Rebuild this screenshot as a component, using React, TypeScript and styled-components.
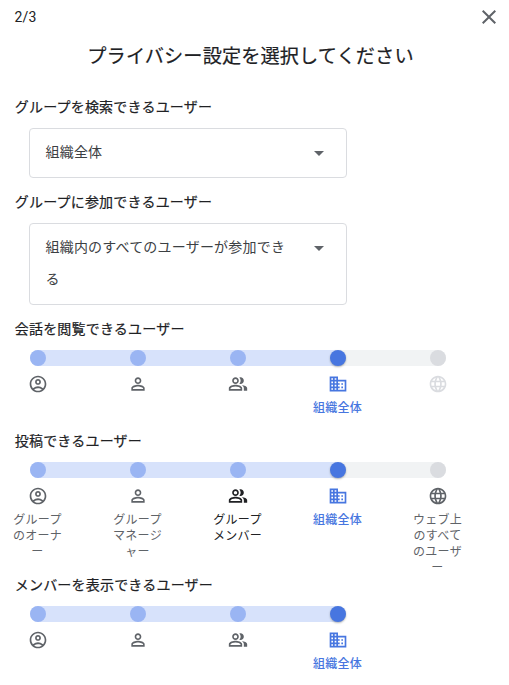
import React from 'react';
import styled, { createGlobalStyle } from 'styled-components';
import {
  MdArrowDropDown,
  MdClose,
  MdDomain,
  MdLanguage,
  MdOutlineAccountCircle,
  MdOutlinePeopleAlt,
  MdPersonOutline,
} from 'react-icons/md';
import type { IconType } from 'react-icons';

const GlobalStyle = createGlobalStyle`
  *, *::before, *::after { box-sizing: border-box; }
  body {
    margin: 0;
    background: #fff;
    color: #202124;
    font-family: Roboto, "Noto Sans CJK JP", sans-serif;
    overflow: hidden;
  }
`;

const Dialog = styled.main`
  display: flex;
  flex-direction: column;
  padding: 0 8px 0 14px;
`;

const Header = styled.header`
  display: flex;
  align-items: center;
  justify-content: space-between;
  height: 34px;
  padding-left: 0.5px;
  font-size: 14px;
  letter-spacing: 0.2px;
`;

const CloseButton = styled.button`
  display: flex;
  padding: 0;
  border: 0;
  background: none;
  color: #5f6368;
  font-size: 24px;
`;

const Title = styled.h1`
  margin: 10px 0 28px;
  padding-right: 14px;
  font-size: 19.2px;
  font-weight: 400;
  letter-spacing: 0.1px;
  line-height: 25px;
  text-align: center;
  -webkit-text-stroke: 0.2px currentColor;
`;

const Section = styled.section<{ $gap: number }>`
  display: flex;
  flex-direction: column;
  margin-bottom: ${({ $gap }) => $gap}px;
`;

const SectionLabel = styled.h2`
  margin: 0 0 11px;
  padding-left: 0.75px;
  font-size: 14px;
  font-weight: 400;
  letter-spacing: 0.2px;
  line-height: 20px;
  -webkit-text-stroke: 0.2px currentColor;
`;

const SelectBox = styled.div`
  display: flex;
  align-items: flex-start;
  justify-content: space-between;
  width: 318px;
  margin-left: 15px;
  padding: 7px 15px 9px 15.5px;
  border: 1px solid #dadce0;
  border-radius: 4px;
  color: #3c4043;
`;

const SelectText = styled.span`
  width: 244px;
  font-size: 14px;
  letter-spacing: 0.2px;
  line-height: 32px;
`;

const SelectArrow = styled(MdArrowDropDown)`
  margin-top: 5px;
  color: #5f6368;
  font-size: 24px;
`;

const Track = styled.div<{ $total: number; $selected: number }>`
  display: flex;
  justify-content: space-between;
  width: ${({ $total }) => ($total - 1) * 100 + 16}px;
  height: 16px;
  margin-left: 16px;
  border-radius: 8px;
  background: linear-gradient(
    to right,
    #d7e2fb ${({ $selected }) => $selected * 100 + 8}px,
    #f1f3f4 ${({ $selected }) => $selected * 100 + 8}px
  );
`;

type StopState = 'passed' | 'selected' | 'beyond';
const stopColor: Record<StopState, string> = {
  passed: '#9ab5f3',
  selected: '#4776e0',
  beyond: '#dadce0',
};

const Stop = styled.span<{ $state: StopState }>`
  width: 16px;
  height: 16px;
  border-radius: 50%;
  background: ${({ $state }) => stopColor[$state]};
  box-shadow: ${({ $state }) => ($state === 'selected' ? '0 1px 2px rgba(60, 64, 67, 0.4)' : 'none')};
`;

const Options = styled.div<{ $height: number }>`
  display: flex;
  gap: 48px;
  height: ${({ $height }) => $height}px;
  margin-left: -2px;
  padding-top: 8px;
`;

type Tone = 'normal' | 'active' | 'hover' | 'disabled';
const toneColor: Record<Tone, string> = {
  normal: '#5f6368',
  active: '#4776e0',
  hover: '#202124',
  disabled: '#dadce0',
};

const Option = styled.div<{ $tone: Tone }>`
  display: flex;
  flex-direction: column;
  flex: 0 0 52px;
  align-items: center;
  color: ${({ $tone }) => toneColor[$tone]};
  font-size: 12px;
  font-weight: ${({ $tone }) => ($tone === 'active' ? 500 : 400)};
  letter-spacing: 0.3px;
  line-height: 16px;
  text-align: center;

  svg {
    flex: none;
    margin-bottom: 6px;
    font-size: 20px;
  }
`;

const OptionLine = styled.span`
  margin-right: 1px;
`;

interface Level {
  icon: IconType;
  text?: string[];
  tone?: Tone;
}

interface SliderProps {
  label: string;
  levels: Level[];
  height?: number;
  gap?: number;
}

const SELECTED = 3;

function AccessSlider({ label, levels, height = 50, gap = 15 }: SliderProps) {
  return (
    <Section $gap={gap}>
      <SectionLabel>{label}</SectionLabel>
      <Track $total={levels.length} $selected={SELECTED}>
        {levels.map((_, i) => (
          <Stop key={i} $state={i < SELECTED ? 'passed' : i === SELECTED ? 'selected' : 'beyond'} />
        ))}
      </Track>
      <Options $height={height}>
        {levels.map(({ icon: Icon, text = [], tone = 'normal' }, i) => (
          <Option key={i} $tone={tone}>
            <Icon />
            {text.map((line, n) => (
              <OptionLine key={n}>{line}</OptionLine>
            ))}
          </Option>
        ))}
      </Options>
    </Section>
  );
}

function SelectField({ label, value }: { label: string; value: string }) {
  return (
    <Section $gap={14}>
      <SectionLabel>{label}</SectionLabel>
      <SelectBox>
        <SelectText>{value}</SelectText>
        <SelectArrow />
      </SelectBox>
    </Section>
  );
}

const owner: Level = { icon: MdOutlineAccountCircle };
const manager: Level = { icon: MdPersonOutline };
const member: Level = { icon: MdOutlinePeopleAlt };
const organization: Level = { icon: MdDomain, text: ['組織全体'], tone: 'active' };

export default function App() {
  return (
    <>
      <GlobalStyle />
      <Dialog lang="ja">
        <Header>
          <span>2/3</span>
          <CloseButton aria-label="閉じる">
            <MdClose />
          </CloseButton>
        </Header>
        <Title>プライバシー設定を選択してください</Title>
        <SelectField label="グループを検索できるユーザー" value="組織全体" />
        <SelectField label="グループに参加できるユーザー" value="組織内のすべてのユーザーが参加できる" />
        <AccessSlider
          label="会話を閲覧できるユーザー"
          levels={[owner, manager, member, organization, { icon: MdLanguage, tone: 'disabled' }]}
        />
        <AccessSlider
          label="投稿できるユーザー"
          levels={[
            { ...owner, text: ['グループ', 'のオーナ', 'ー'] },
            { ...manager, text: ['グループ', 'マネージ', 'ャー'] },
            { ...member, text: ['グループ', 'メンバー'], tone: 'hover' },
            organization,
            { icon: MdLanguage, text: ['ウェブ上', 'のすべて', 'のユーザ', 'ー'] },
          ]}
          height={90}
          gap={7}
        />
        <AccessSlider label="メンバーを表示できるユーザー" levels={[owner, manager, member, organization]} />
      </Dialog>
    </>
  );
}
